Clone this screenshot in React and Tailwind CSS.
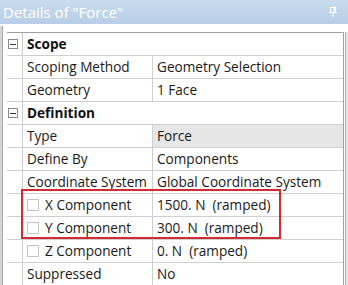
import React from "react";

const font = { fontFamily: '"Open Sans", "Noto Sans", "Liberation Sans", sans-serif' };

function Minus() {
  return (
    <div className="w-[10px] h-[10px] border border-[#8a8a8a] bg-white flex items-center justify-center">
      <div className="w-[6px] h-[1px] bg-[#333]" />
    </div>
  );
}

function Check() {
  return <div className="w-[12px] h-[12px] border border-[#c4c4c4] bg-white mr-[6px] shrink-0" />;
}

function Header({ label }) {
  return (
    <div className="flex h-[23px] border-b border-[#cfcfcf]">
      <div className="w-[16px] flex items-center justify-start pl-[1px] border-r border-[#cfcfcf]">
        <Minus />
      </div>
      <div className="flex-1 flex items-center pl-[4px] font-bold text-[#111]">{label}</div>
    </div>
  );
}

function Row({ name, value, check, grayValue }) {
  return (
    <div className="flex h-[23px] border-b border-[#cfcfcf]">
      <div className="w-[16px] border-r border-[#cfcfcf]" />
      <div className="w-[130px] flex items-center pl-[4px] border-r border-[#cfcfcf] whitespace-nowrap overflow-hidden">
        {check && <Check />}
        {name}
      </div>
      <div className={"flex-1 flex items-center pl-[4px] whitespace-pre " + (grayValue ? "bg-[#e6e6e6]" : "")}>
        {value}
      </div>
    </div>
  );
}

export default function App() {
  return (
    <div className="w-[348px] h-[285px] overflow-hidden bg-white relative text-[13.6px] text-[#1a1a1a]" style={font}>
      <div className="h-[24px] bg-gradient-to-b from-[#c9dcef] to-[#b7cee7] flex items-center justify-between px-[3px]">
        <span className="text-white text-[15px] leading-none">Details of "Force"</span>
        <svg width="8" height="10" viewBox="0 0 8 10" className="mr-[8px]">
          <rect x="1.5" y="0.5" width="5" height="5" fill="none" stroke="white" />
          <rect x="0" y="5" width="8" height="1" fill="white" />
          <rect x="3.5" y="6" width="1" height="4" fill="white" />
          <rect x="4.5" y="1" width="1" height="4" fill="white" />
        </svg>
      </div>
      <div className="flex h-[261px]">
        <div className="w-[3px] bg-[#d6d6d6] border-r border-[#a9a9a9] mt-[2px]" />
        <div className="flex-1 pt-[8px] pl-[4px] pr-[1px] flex">
          <div className="flex-1 border-t border-r border-[#a0a0a0]">
            <Header label="Scope" />
            <Row name="Scoping Method" value="Geometry Selection" />
            <Row name="Geometry" value="1 Face" />
            <Header label="Definition" />
            <Row name="Type" value="Force" grayValue />
            <Row name="Define By" value="Components" />
            <Row name="Coordinate System" value="Global Coordinate System" />
            <Row name="X Component" value="1500. N  (ramped)" check />
            <Row name="Y Component" value="300. N  (ramped)" check />
            <Row name="Z Component" value="0. N  (ramped)" check />
            <Row name="Suppressed" value="No" />
          </div>
        </div>
        <div className="w-[3px] bg-[#e4e4e4] border-l border-[#b0b0b0] mt-[8px]" />
      </div>
      <div className="absolute left-[21px] top-[189px] w-[260px] h-[50px] border-[2px] border-[#d42a34]" />
    </div>
  );
}
